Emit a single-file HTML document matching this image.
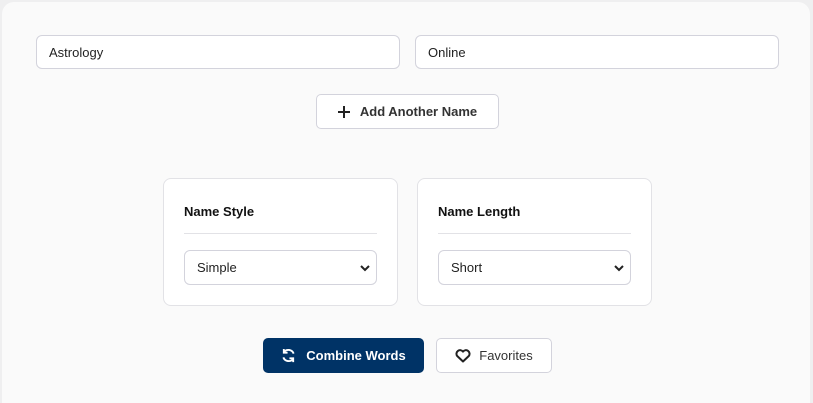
<!DOCTYPE html>
<html><head><style>
*{box-sizing:border-box;margin:0;padding:0}
html,body{width:813px;height:403px;overflow:hidden}
body{background:#efeff0;font-family:"Liberation Sans",sans-serif;position:relative}
.card{position:absolute;left:2px;top:2px;width:808px;height:401px;background:#fafafa;border-radius:12px 12px 0 0}
.inp{position:absolute;top:35px;height:34px;width:364px;background:#fff;border:1px solid #d3d3dc;border-radius:6px;font-size:13px;color:#222;padding:9px 12px}
.btn{position:absolute;background:#fff;border:1px solid #d3d3dc;border-radius:5px;font-size:13px;color:#222;display:flex;align-items:center;justify-content:center;gap:8px}
.box{position:absolute;top:178px;width:235px;height:128px;background:#fff;border:1px solid #e2e2e6;border-radius:8px}
.box h3{position:absolute;left:20px;top:25px;font-size:13px;font-weight:bold;color:#111}
.box .hr{position:absolute;left:20px;right:20px;top:54px;border-top:1px solid #e2e2e6}
.sel{position:absolute;left:20px;top:71px;width:193px;height:35px;border:1px solid #d3d3dc;border-radius:6px;font-size:13px;color:#222;padding:9px 12px}
.sel svg{position:absolute;right:6px;top:13px}
</style></head><body>
<div class="card"></div>
<div class="inp" style="left:36px">Astrology</div>
<div class="inp" style="left:415px">Online</div>
<div class="btn" style="left:316px;top:94px;width:183px;height:35px;font-weight:bold;color:#333;gap:10px"><svg width="12" height="12" viewBox="0 0 12 12"><path d="M6 0v12M0 6h12" stroke="#222" stroke-width="2"/></svg>Add Another Name</div>
<div class="box" style="left:163px"><h3>Name Style</h3><div class="hr"></div><div class="sel">Simple<svg width="10" height="8" viewBox="0 0 10 8"><path d="M1 2l4 4 4-4" stroke="#222" stroke-width="2" fill="none"/></svg></div></div>
<div class="box" style="left:417px"><h3>Name Length</h3><div class="hr"></div><div class="sel">Short<svg width="10" height="8" viewBox="0 0 10 8"><path d="M1 2l4 4 4-4" stroke="#222" stroke-width="2" fill="none"/></svg></div></div>
<div class="btn" style="left:263px;top:338px;width:161px;height:35px;background:#003366;border-color:#003366;color:#fff;font-weight:bold;gap:10px"><svg width="15" height="15" viewBox="0 0 16 16" fill="none" stroke="#fff" stroke-width="2"><path d="M13.5 6A6 6 0 0 0 3 4.5M2.5 10A6 6 0 0 0 13 11.5"/><path d="M3 1v4h4M13 15v-4H9"/></svg>Combine Words</div>
<div class="btn" style="left:436px;top:338px;width:116px;height:35px;color:#333"><svg width="16" height="14" viewBox="0 0 16 14"><path d="M8 12.5L2.2 7A3.3 3.3 0 0 1 8 2.6 3.3 3.3 0 0 1 13.8 7Z" fill="none" stroke="#222" stroke-width="2" stroke-linejoin="round"/></svg>Favorites</div>
</body></html>
